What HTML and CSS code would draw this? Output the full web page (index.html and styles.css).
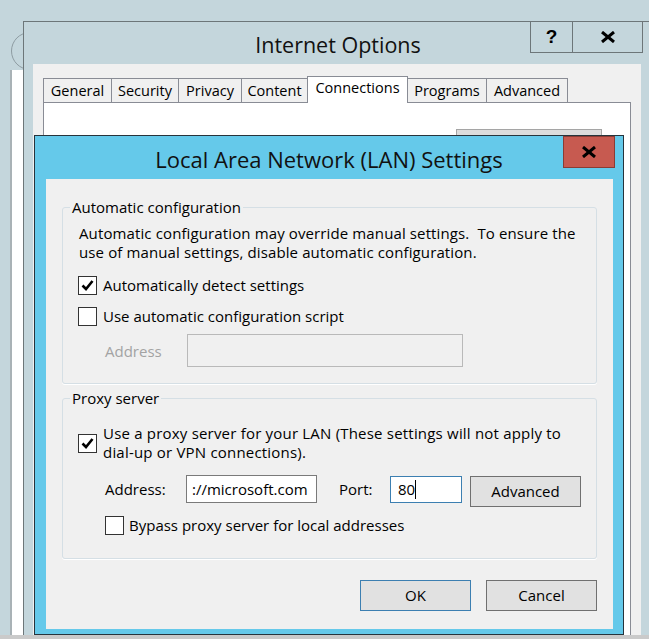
FILE: index.html
```html
<!DOCTYPE html>
<html>
<head>
<meta charset="utf-8">
<title>Internet Options</title>
<link rel="stylesheet" href="styles.css">
</head>
<body>
<div class="desktop">
  <div class="backwin"></div>
  <div class="backbtn"></div>

  <div class="inetwin">
    <div class="inet-title">Internet Options</div>
    <div class="capbtn help">?</div>
    <div class="capbtn close">
      <svg width="16" height="12" viewBox="0 0 16 12"><path d="M2 1 L14 11 M14 1 L2 11" stroke="#000" stroke-width="3" fill="none"/></svg>
    </div>
    <div class="inet-client">
      <div class="tabs">
        <div class="tab w1">General</div>
        <div class="tab w2">Security</div>
        <div class="tab w3">Privacy</div>
        <div class="tab w4">Content</div>
        <div class="tab sel w5">Connections</div>
        <div class="tab w6">Programs</div>
        <div class="tab w7 last">Advanced</div>
      </div>
      <div class="tabpanel">
        <div class="ghostbtn"></div>
      </div>
    </div>
  </div>

  <div class="lanwin">
    <div class="lan-title">Local Area Network (LAN) Settings</div>
    <div class="lan-close">
      <svg width="16" height="12" viewBox="0 0 16 12"><path d="M2 1 L14 11 M14 1 L2 11" stroke="#000" stroke-width="3" fill="none"/></svg>
    </div>
    <div class="lan-client">
      <fieldset class="group g1">
        <legend>Automatic configuration</legend>
        <p class="desc">Automatic configuration may override manual settings.&nbsp; To ensure the<br>use of manual settings, disable automatic configuration.</p>
        <div class="cbrow r1">
          <span class="cb"><svg width="17" height="17" viewBox="0 0 17 17"><path d="M3.5 8.5 L7 12 L13.5 4" stroke="#000" stroke-width="2.6" fill="none"/></svg></span>
          <span>Automatically detect settings</span>
        </div>
        <div class="cbrow r2">
          <span class="cb"></span>
          <span>Use automatic configuration script</span>
        </div>
        <div class="addrrow">
          <span class="lbl disabled">Address</span>
          <span class="input dis"></span>
        </div>
      </fieldset>

      <fieldset class="group g2">
        <legend>Proxy server</legend>
        <div class="cbrow proxy">
          <span class="cb"><svg width="17" height="17" viewBox="0 0 17 17"><path d="M3.5 8.5 L7 12 L13.5 4" stroke="#000" stroke-width="2.6" fill="none"/></svg></span>
          <span class="two">Use a proxy server for your LAN (These settings will not apply to<br>dial-up or VPN connections).</span>
        </div>
        <div class="proxyrow">
          <span class="lbl plbl">Address:</span>
          <span class="input addr">://microsoft.com</span>
          <span class="lbl portlbl">Port:</span>
          <span class="input port focus">80<span class="caret"></span></span>
          <span class="btn adv">Advanced</span>
        </div>
        <div class="cbrow bypass">
          <span class="cb"></span>
          <span>Bypass proxy server for local addresses</span>
        </div>
      </fieldset>

      <div class="buttons">
        <span class="btn default">OK</span>
        <span class="btn">Cancel</span>
      </div>
    </div>
  </div>

  <div class="taskbar"></div>
</div>
</body>
</html>
```

FILE: styles.css
```css
html, body {
  margin: 0;
  padding: 0;
}
body {
  width: 649px;
  height: 639px;
  overflow: hidden;
  background: #c4d6dc;
  font-family: "Open Sans", "Noto Sans", sans-serif;
  font-size: 15px;
  color: #000;
}
.desktop {
  position: relative;
  width: 649px;
  height: 639px;
  overflow: hidden;
}
.backwin {
  position: absolute;
  left: 10px;
  top: 70px;
  width: 40px;
  height: 600px;
  background: #fff;
  border-left: 2px solid #a9b2b6;
}
.backbtn {
  position: absolute;
  left: 11px;
  top: 32px;
  width: 36px;
  height: 36px;
  border: 1px solid #8e9ca2;
  border-radius: 50%;
}

/* Internet Options window */
.inetwin {
  position: absolute;
  left: 23px;
  top: 21px;
  width: 640px;
  height: 700px;
  border: 1px solid #6d7679;
  background: #c4d6dc;
}
.inet-title {
  height: 42px;
  width: 628px;
  text-align: center;
  font-size: 21.5px;
  line-height: 46px;
  color: #111;
}
.capbtn {
  position: absolute;
  top: -1px;
  height: 32px;
  box-sizing: border-box;
  border: 1px solid #6d7679;
  display: flex;
  align-items: center;
  justify-content: center;
}
.capbtn.help {
  left: 506px;
  width: 43px;
  font-family: "Liberation Sans", Arial, sans-serif;
  font-weight: bold;
  font-size: 19px;
}
.capbtn.close {
  left: 548px;
  width: 71px;
}
.inet-client {
  margin-left: 9px;
  width: 608px;
  height: 700px;
  background: #f0f0f0;
}
.tabs {
  display: flex;
  align-items: flex-end;
  padding-top: 12px;
  padding-left: 10px;
}
.tab {
  box-sizing: border-box;
  height: 24px;
  border: 1px solid #898c95;
  border-bottom: none;
  background: #f0f0f0;
  margin-right: -1px;
  text-align: center;
  font-size: 14.5px;
  line-height: 23px;
}
.tab.sel {
  height: 27px;
  margin-bottom: -1px;
  background: #fff;
  position: relative;
  z-index: 2;
  line-height: 22px;
}
.w1 { width: 69px; }
.w2 { width: 68px; }
.w3 { width: 64px; }
.w4 { width: 67px; }
.w5 { width: 101px; }
.w6 { width: 80px; }
.w7 { width: 82px; }
.tabpanel {
  position: relative;
  margin-left: 10px;
  width: 588px;
  height: 560px;
  box-sizing: border-box;
  border: 1px solid #898c95;
  background: #fff;
  overflow: hidden;
}
.ghostbtn {
  margin: 26px 0 0 412px;
  width: 146px;
  height: 30px;
  box-sizing: border-box;
  border: 1px solid #a5a5a5;
  background: #dcdcdc;
}

/* LAN dialog */
.lanwin {
  position: absolute;
  left: 34px;
  top: 135px;
  width: 590px;
  height: 500px;
  box-sizing: border-box;
  border: 1px solid #27343c;
  background: #65c9ea;
  padding: 0 10px 0 11px;
  z-index: 3;
}
.lan-title {
  height: 43px;
  text-align: center;
  margin-left: -11px;
  margin-right: -10px;
  font-size: 22px;
  line-height: 46px;
  color: #111;
}
.lan-close {
  position: absolute;
  left: 528px;
  top: 0;
  width: 52px;
  height: 32px;
  box-sizing: border-box;
  border: 1px solid #8a3c35;
  background: #c75a50;
  display: flex;
  align-items: center;
  justify-content: center;
}
.lan-client {
  width: 567px;
  height: 450px;
  box-sizing: border-box;
  background: #f0f0f0;
  padding: 0 16px;
  overflow: hidden;
}
.group {
  margin: 0;
  border: 1px solid #d5dfe5;
  border-radius: 3px;
  box-shadow: 0 1px 0 #fff;
  min-width: 0;
}
.group legend {
  padding: 0 2px;
  margin-left: -8px;
  line-height: 17px;
}
.g1 {
  margin-top: 20px;
  padding: 8px 15px 16px;
}
.g2 {
  margin-top: 6px;
  padding: 17px 15px 23px;
}
.desc {
  margin: 0;
  padding-left: 1px;
  line-height: 19px;
  white-space: nowrap;
  letter-spacing: 0.12px;
}
.two {
  letter-spacing: 0.2px;
}
.cbrow {
  display: flex;
  align-items: center;
  gap: 6px;
  line-height: 19px;
  white-space: nowrap;
}
.cb {
  flex: none;
  width: 19px;
  height: 19px;
  box-sizing: border-box;
  border: 1px solid #333;
  background: #fff;
  display: flex;
  align-items: center;
  justify-content: center;
}
.r1 { margin-top: 14px; }
.r2 { margin-top: 12px; }
.addrrow {
  margin-top: 8px;
  display: flex;
  align-items: center;
}
.lbl {
  flex: none;
  line-height: 28px;
  white-space: nowrap;
}
.disabled {
  color: #a3a3a3;
  padding-left: 27px;
  width: 109px;
  box-sizing: border-box;
}
.input {
  flex: none;
  box-sizing: border-box;
  border: 1px solid #7a7a7a;
  background: #fff;
  height: 28px;
  line-height: 26px;
  padding-left: 5px;
  white-space: nowrap;
  overflow: hidden;
}
.input.dis {
  width: 276px;
  height: 33px;
  border-color: #b9b9b9;
  background: #f0f0f0;
}
.proxyrow {
  margin-top: 13px;
  display: flex;
  align-items: flex-start;
  height: 32px;
}
.plbl {
  padding-left: 27px;
  width: 108px;
  box-sizing: border-box;
}
.input.addr {
  width: 131px;
}
.portlbl {
  margin-left: 22px;
  width: 51px;
}
.input.port {
  width: 72px;
  height: 27px;
  margin-top: 1px;
  border-color: #3c7fb1;
  padding-left: 7px;
  line-height: 25px;
}
.caret {
  display: inline-block;
  width: 1px;
  height: 19px;
  background: #000;
  vertical-align: -4px;
}
.btn {
  flex: none;
  box-sizing: border-box;
  width: 111px;
  height: 31px;
  border: 1px solid #707070;
  background: #e1e1e1;
  text-align: center;
  line-height: 29px;
}
.btn.adv {
  margin-left: 8px;
  margin-top: 1px;
}
.btn.default {
  border-color: #3c7fb1;
}
.bypass {
  margin-top: 9px;
  margin-left: 27px;
  gap: 5px;
}
.buttons {
  margin-top: 21px;
  display: flex;
  justify-content: flex-end;
  gap: 15px;
}
.taskbar {
  position: absolute;
  left: 0;
  top: 635px;
  width: 649px;
  height: 4px;
  background: #cacaca;
  z-index: 5;
}
```
